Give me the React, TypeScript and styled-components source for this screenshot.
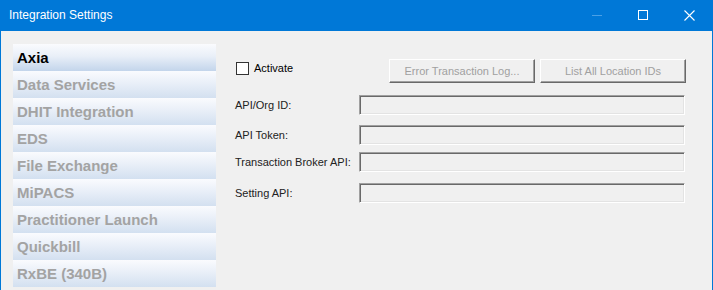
import React from 'react';
import styled, { createGlobalStyle } from 'styled-components';

const integrations = [
  'Axia',
  'Data Services',
  'DHIT Integration',
  'EDS',
  'File Exchange',
  'MiPACS',
  'Practitioner Launch',
  'Quickbill',
  'RxBE (340B)',
];

const fields = [
  { label: 'API/Org ID:', gap: 12 },
  { label: 'API Token:', gap: 10 },
  { label: 'Transaction Broker API:', gap: 7 },
  { label: 'Setting API:', gap: 11 },
];

const GlobalStyle = createGlobalStyle`
  html, body {
    margin: 0;
    padding: 0;
    background: #f0f0f0;
  }
  body {
    font-family: "Liberation Sans", Arial, sans-serif;
  }
`;

const Window = styled.div`
  box-sizing: border-box;
  width: 713px;
  height: 290px;
  overflow: hidden;
  background: #f0f0f0;
  border-left: 1px solid #0078d7;
  border-right: 1px solid #0078d7;
  display: flex;
  flex-direction: column;
`;

const TitleBar = styled.div`
  height: 31px;
  flex: none;
  background: #0078d7;
  display: flex;
  align-items: center;
`;

const Title = styled.span`
  flex: 1;
  padding-left: 8px;
  margin-top: -1px;
  color: #fff;
  font-size: 12px;
`;

const CaptionButton = styled.div`
  width: 46px;
  height: 30px;
  display: flex;
  align-items: center;
  justify-content: center;
  margin-top: -1px;
`;

const Body = styled.div`
  flex: 1;
  display: grid;
  grid-template-columns: 203px 1fr;
  column-gap: 19px;
  padding: 13px 26px 0 12px;
`;

const Sidebar = styled.div`
  display: flex;
  flex-direction: column;
`;

const SideItem = styled.div<{ $active?: boolean }>`
  height: 27px;
  flex: none;
  display: flex;
  align-items: center;
  padding-left: 4px;
  background: linear-gradient(#fafbfe 0%, #e9eff8 45%, ${(p) => (p.$active ? '#c3d5eb' : '#d3e0f0')} 100%);
  color: ${(p) => (p.$active ? '#000' : '#a3a3a3')};
  font-size: 15px;
  font-weight: bold;
  white-space: nowrap;
`;

const Panel = styled.div`
  display: flex;
  flex-direction: column;
  padding-top: 15px;
`;

const TopRow = styled.div`
  height: 24px;
  display: flex;
  align-items: center;
`;

const CheckLabel = styled.label`
  display: flex;
  align-items: center;
  gap: 5px;
  font-size: 11px;
  color: #000;
  margin-left: 1px;
  margin-top: -6px;
`;

const CheckBox = styled.span`
  box-sizing: border-box;
  width: 13px;
  height: 13px;
  background: #fff;
  border: 1px solid #333;
`;

const ButtonGroup = styled.div`
  margin-left: auto;
  display: flex;
  gap: 5px;
`;

const Button = styled.div`
  box-sizing: border-box;
  width: 146px;
  height: 24px;
  display: flex;
  align-items: center;
  justify-content: center;
  font-size: 11px;
  color: #a0a0a0;
  background: #f0f0f0;
  border: 1px solid;
  border-color: #fff #696969 #696969 #fff;
  box-shadow: inset -1px -1px #a0a0a0;
  padding-bottom: 1px;
`;

const FieldRow = styled.div<{ $gap: number }>`
  display: grid;
  grid-template-columns: 124px 1fr;
  align-items: center;
  margin-top: ${(p) => p.$gap}px;
  margin-right: 1px;
`;

const FieldLabel = styled.span`
  font-size: 11px;
  color: #222;
  white-space: nowrap;
`;

const Field = styled.div`
  box-sizing: border-box;
  height: 20px;
  background: #f0f0f0;
  border: 1px solid;
  border-color: #a0a0a0 #fff #fff #a0a0a0;
  box-shadow: inset 1px 1px #696969, inset -1px -1px #e3e3e3;
`;

const App: React.FC = () => (
  <>
    <GlobalStyle />
    <Window>
      <TitleBar>
        <Title>Integration Settings</Title>
        <CaptionButton>
          <svg width="10" height="10" viewBox="0 0 10 10">
            <path d="M0 5.5h10" stroke="#4aa0e6" strokeWidth="1" />
          </svg>
        </CaptionButton>
        <CaptionButton>
          <svg width="10" height="10" viewBox="0 0 10 10">
            <rect x="0.5" y="0.5" width="9" height="9" fill="none" stroke="#fff" strokeWidth="1" />
          </svg>
        </CaptionButton>
        <CaptionButton>
          <svg width="11" height="11" viewBox="0 0 11 11">
            <path d="M0.5 0.5l10 10M10.5 0.5l-10 10" stroke="#fff" strokeWidth="1.1" />
          </svg>
        </CaptionButton>
      </TitleBar>
      <Body>
        <Sidebar>
          {integrations.map((name, i) => (
            <SideItem key={name} $active={i === 0}>
              {name}
            </SideItem>
          ))}
        </Sidebar>
        <Panel>
          <TopRow>
            <CheckLabel>
              <CheckBox />
              Activate
            </CheckLabel>
            <ButtonGroup>
              <Button>Error Transaction Log...</Button>
              <Button>List All Location IDs</Button>
            </ButtonGroup>
          </TopRow>
          {fields.map((f) => (
            <FieldRow key={f.label} $gap={f.gap}>
              <FieldLabel>{f.label}</FieldLabel>
              <Field />
            </FieldRow>
          ))}
        </Panel>
      </Body>
    </Window>
  </>
);

export default App;
